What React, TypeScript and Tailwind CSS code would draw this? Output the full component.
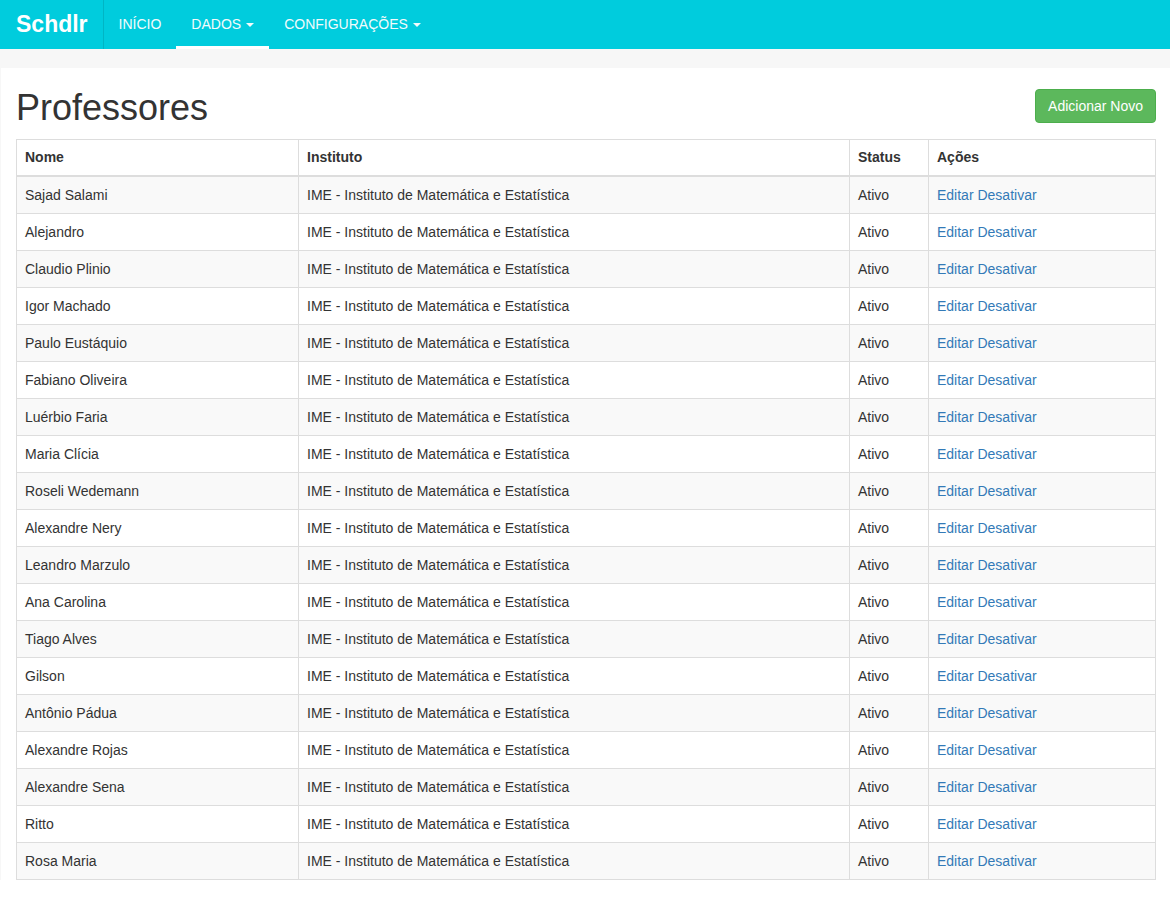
import React from "react";

const professores = [
  "Sajad Salami",
  "Alejandro",
  "Claudio Plinio",
  "Igor Machado",
  "Paulo Eustáquio",
  "Fabiano Oliveira",
  "Luérbio Faria",
  "Maria Clícia",
  "Roseli Wedemann",
  "Alexandre Nery",
  "Leandro Marzulo",
  "Ana Carolina",
  "Tiago Alves",
  "Gilson",
  "Antônio Pádua",
  "Alexandre Rojas",
  "Alexandre Sena",
  "Ritto",
  "Rosa Maria",
];

const Caret = () => (
  <span className="ml-[5px] inline-block h-0 w-0 border-x-[4px] border-t-[4px] border-x-transparent border-t-[#f2fbfc] align-middle" />
);

const NavItem: React.FC<{ label: string; dropdown?: boolean; active?: boolean }> = ({
  label,
  dropdown,
  active,
}) => (
  <a
    href="#"
    className={
      "flex h-full items-center px-[15px] text-[14px] text-[#f2fbfc] " +
      (active ? "border-b-[3px] border-white pt-[3px]" : "")
    }
  >
    {label}
    {dropdown && <Caret />}
  </a>
);

export default function App() {
  return (
    <div className="min-h-[900px] bg-white text-[14px] text-[#333] [font-family:'Liberation_Sans',Arial,sans-serif]">
      {/* navbar */}
      <nav className="flex h-[49px] bg-[#00ccdd]">
        <a href="#" className="flex items-center border-r border-[#00b5c4] pl-[16px] pr-[15px] text-[23px] font-bold text-white">
          Schdlr
        </a>
        <NavItem label="INÍCIO" />
        <NavItem label="DADOS" dropdown active />
        <NavItem label="CONFIGURAÇÕES" dropdown />
      </nav>

      <div className="bg-[#f7f7f7] pt-[19px] pl-[1px]">
        <div className="bg-white pl-[15px] pr-[14px]">
          <div className="flex items-start justify-between">
            <h1 className="mt-[20px] mb-[11px] text-[36px] leading-[40px] font-normal">Professores</h1>
            <button className="mt-[21px] h-[34px] rounded-[4px] border border-[#4cae4c] bg-[#5cb85c] px-[12px] text-[14px] text-white">
              Adicionar Novo
            </button>
          </div>

          <table className="w-full border-collapse border border-[#ddd] text-left">
            <thead>
              <tr>
                <th className="w-[282px] border border-b-2 border-[#ddd] px-[8px] py-[8px] leading-[19px] font-bold">Nome</th>
                <th className="w-[551px] border border-b-2 border-[#ddd] px-[8px] py-[8px] leading-[19px] font-bold">Instituto</th>
                <th className="w-[79px] border border-b-2 border-[#ddd] px-[8px] py-[8px] leading-[19px] font-bold">Status</th>
                <th className="border border-b-2 border-[#ddd] px-[8px] py-[8px] leading-[19px] font-bold">Ações</th>
              </tr>
            </thead>
            <tbody>
              {professores.map((nome, i) => (
                <tr key={nome} className={i % 2 === 0 ? "bg-[#f9f9f9]" : "bg-white"}>
                  <td className="border border-[#ddd] px-[8px] py-[8px] leading-[20px]">{nome}</td>
                  <td className="border border-[#ddd] px-[8px] py-[8px] leading-[20px]">
                    IME - Instituto de Matemática e Estatística
                  </td>
                  <td className="border border-[#ddd] px-[8px] py-[8px] leading-[20px]">Ativo</td>
                  <td className="border border-[#ddd] px-[8px] py-[8px] leading-[20px]">
                    <a href="#" className="text-[#337ab7]">Editar</a>{" "}
                    <a href="#" className="text-[#337ab7]">Desativar</a>
                  </td>
                </tr>
              ))}
            </tbody>
          </table>
        </div>
      </div>
    </div>
  );
}
